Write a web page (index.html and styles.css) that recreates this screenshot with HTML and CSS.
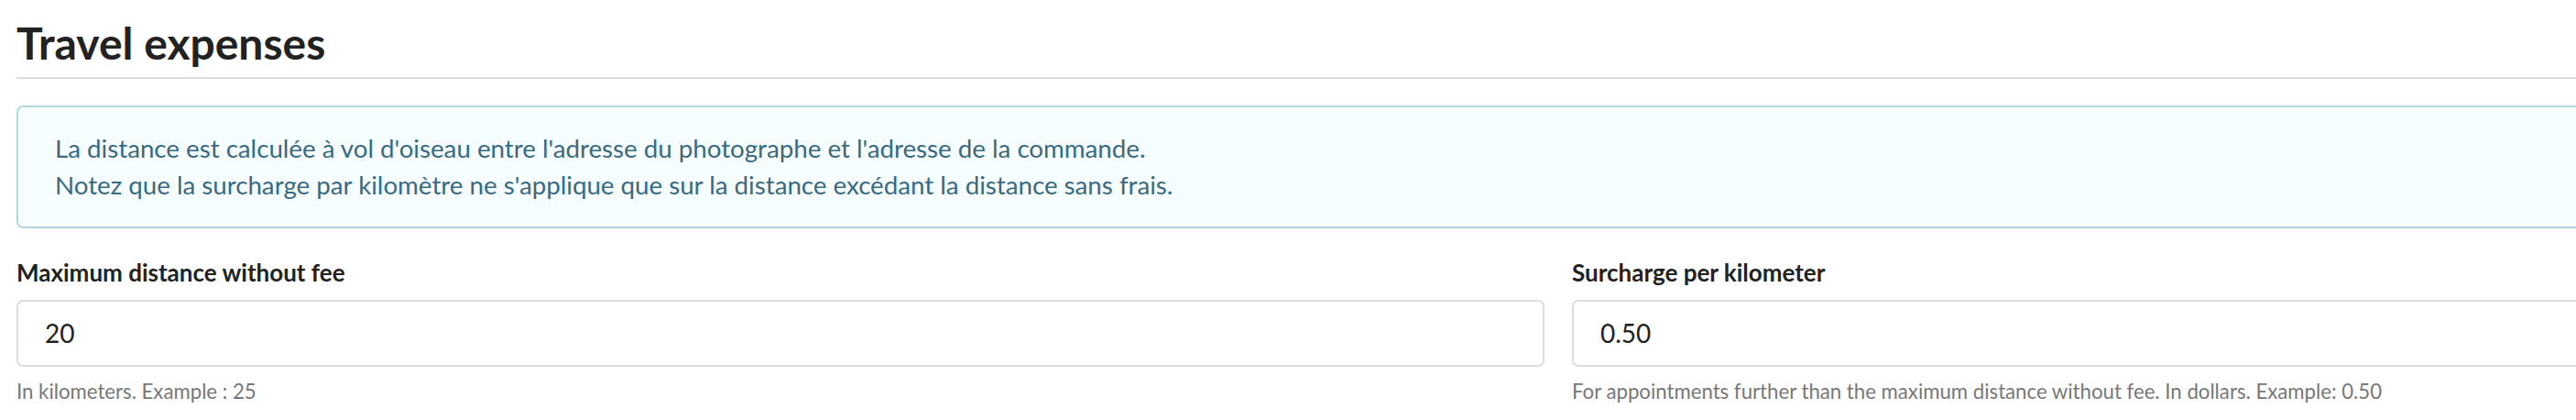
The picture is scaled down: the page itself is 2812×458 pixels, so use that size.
FILE: index.html
```html
<!DOCTYPE html>
<html lang="fr">
<head>
<meta charset="utf-8">
<title>Travel expenses</title>
<link rel="stylesheet" href="styles.css">
</head>
<body>
<div class="page">
  <h3 class="section-title">Travel expenses</h3>
  <div class="alert-info">
    <div>La distance est calculée à vol d'oiseau entre l'adresse du photographe et l'adresse de la commande.</div>
    <div>Notez que la surcharge par kilomètre ne s'applique que sur la distance excédant la distance sans frais.</div>
  </div>
  <div class="row">
    <div class="field">
      <label class="field-label">Maximum distance without fee</label>
      <div class="field-input">20</div>
      <div class="field-help">In kilometers. Example : 25</div>
    </div>
    <div class="field">
      <label class="field-label">Surcharge per kilometer</label>
      <div class="field-input">0.50</div>
      <div class="field-help">For appointments further than the maximum distance without fee. In dollars. Example: 0.50</div>
    </div>
  </div>
</div>
</body>
</html>
```
FILE: styles.css
```css
html, body {
  margin: 0;
  padding: 0;
  background: #ffffff;
  overflow: hidden;
}
body {
  font-family: Lato, "Open Sans", "Liberation Sans", sans-serif;
  color: #222222;
}
.page {
  width: 3366px;
  padding: 18px 0 0 18px;
}
.section-title {
  margin: 0;
  font-size: 48px;
  line-height: 1.2;
  font-weight: 700;
  color: #222222;
  padding-bottom: 8px;
  border-bottom: 2px solid #dddddd;
}
.alert-info {
  margin-top: 29px;
  border: 2px solid #b4d7df;
  border-radius: 7px;
  background: #f6fdff;
  color: #386a82;
  font-size: 27.7px;
  line-height: 40px;
  padding: 25px 40px;
}
.row {
  display: grid;
  grid-template-columns: 1fr 1fr;
  column-gap: 30px;
  margin-top: 31px;
}
.field-label {
  display: block;
  font-size: 26px;
  line-height: 34px;
  font-weight: 700;
  color: #222222;
  margin-bottom: 13px;
}
.field-input {
  height: 69px;
  border: 2px solid #dddddd;
  border-radius: 7px;
  background: #ffffff;
  font-size: 28px;
  line-height: 69px;
  padding: 0 29px;
  color: #222222;
}
.field-help {
  margin-top: 11px;
  font-size: 22.2px;
  line-height: 31px;
  color: #777777;
}
```
